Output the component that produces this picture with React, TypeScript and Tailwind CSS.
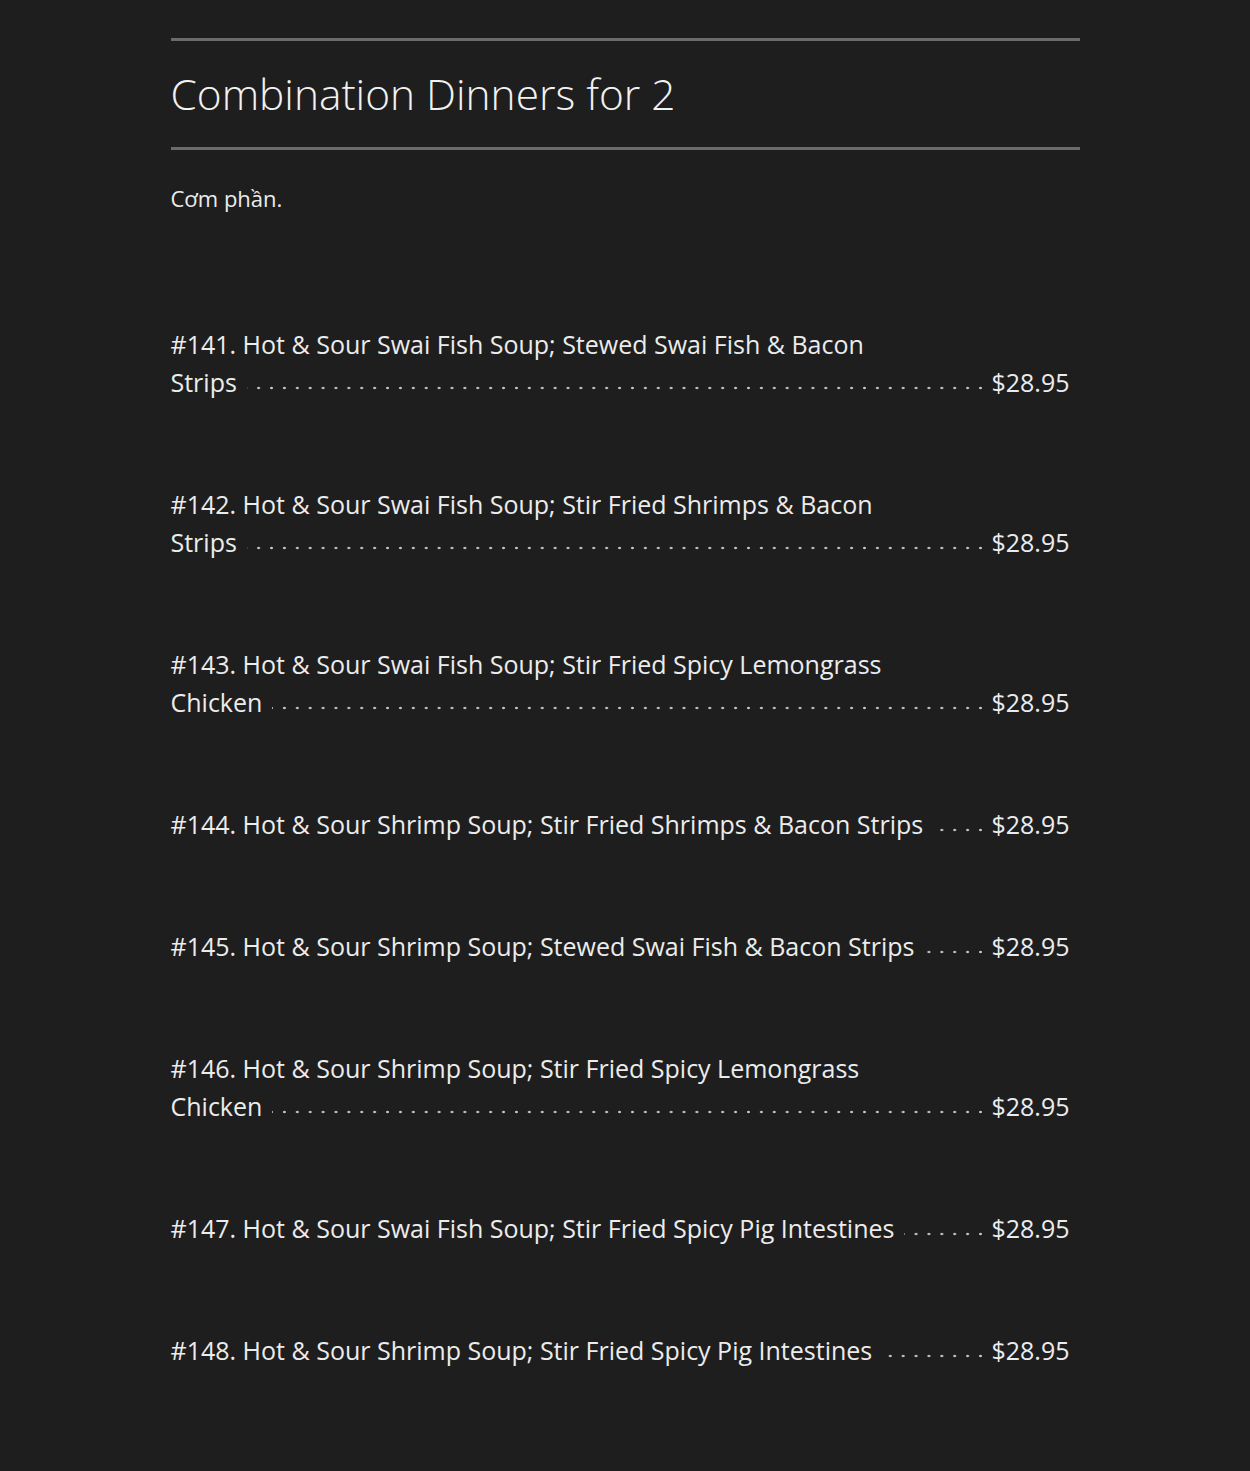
const items = [
  { name: "#141. Hot & Sour Swai Fish Soup; Stewed Swai Fish & Bacon Strips", price: "$28.95" },
  { name: "#142. Hot & Sour Swai Fish Soup; Stir Fried Shrimps & Bacon Strips", price: "$28.95" },
  { name: "#143. Hot & Sour Swai Fish Soup; Stir Fried Spicy Lemongrass Chicken", price: "$28.95" },
  { name: "#144. Hot & Sour Shrimp Soup; Stir Fried Shrimps & Bacon Strips", price: "$28.95" },
  { name: "#145. Hot & Sour Shrimp Soup; Stewed Swai Fish & Bacon Strips", price: "$28.95" },
  { name: "#146. Hot & Sour Shrimp Soup; Stir Fried Spicy Lemongrass Chicken", price: "$28.95" },
  { name: "#147. Hot & Sour Swai Fish Soup; Stir Fried Spicy Pig Intestines", price: "$28.95" },
  { name: "#148. Hot & Sour Shrimp Soup; Stir Fried Spicy Pig Intestines", price: "$28.95" },
];

const MenuItem = ({ name, price }: { name: string; price: string }) => (
  <li className="flex items-end gap-[10px] pr-[10px] text-[25px] leading-[38px] text-[#ececec]">
    <div className="relative flex-1">
      {/* dot leader on the last line, hidden behind the name */}
      <span className="pointer-events-none absolute bottom-[11px] left-0 -right-[5px] h-[4px] bg-[radial-gradient(circle,#c8c8c8_1px,transparent_1.6px)] bg-[length:12.9px_4px] bg-right bg-repeat-x" />
      <div className="relative max-w-[768px]">
        <span className="bg-[#1e1e1e] pr-[10px]">{name}</span>
      </div>
    </div>
    <span className="shrink-0">{price}</span>
  </li>
);

export default function App() {
  return (
    <div className="min-h-[1471px] bg-[#1e1e1e] pt-[38px] pb-[101px] font-['Open_Sans',sans-serif] text-[#f2f2f2]">
      <div className="mx-auto w-[909px]">
        <div className="h-[3px] bg-[#6b6b6b]" />
        <h1 className="py-[24px] text-[42.4px] font-light leading-[58px]">Combination Dinners for 2</h1>
        <div className="h-[3px] bg-[#6b6b6b]" />
        <p className="mt-[33px] text-[22px] leading-[30px] text-[#ececec]">Cơm phần.</p>
        <ul className="mt-[112px] flex flex-col gap-[84px]">
          {items.map((item) => (
            <MenuItem key={item.name} {...item} />
          ))}
        </ul>
      </div>
    </div>
  );
}
